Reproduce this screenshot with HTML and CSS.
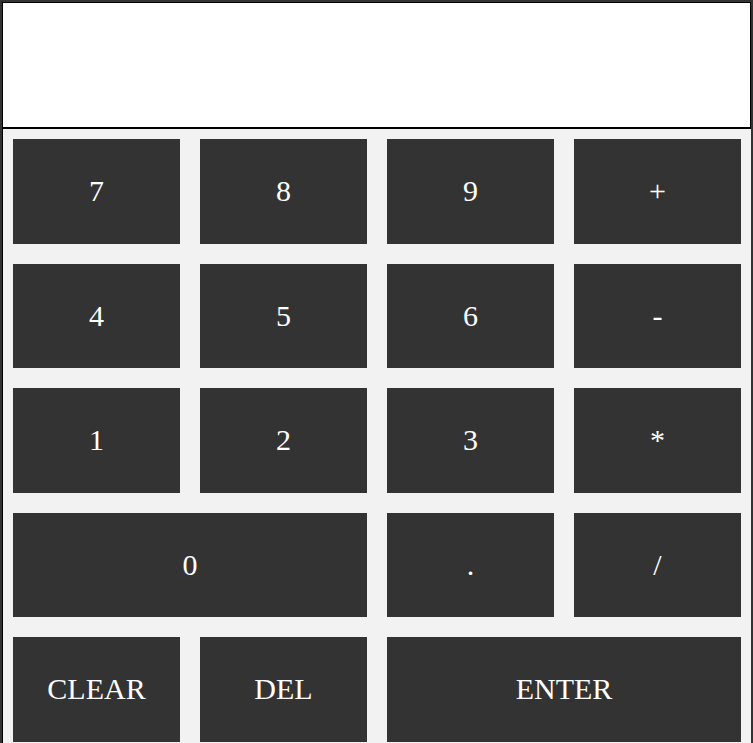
FILE: index.html
```html
<!DOCTYPE html>
<html>
<head>
<meta charset="utf-8">
<link rel="stylesheet" href="styles.css">
</head>
<body>
<div class="calc">
  <div class="display"></div>
  <div class="keys">
    <button class="key">7</button>
    <button class="key">8</button>
    <button class="key">9</button>
    <button class="key">+</button>
    <button class="key">4</button>
    <button class="key">5</button>
    <button class="key">6</button>
    <button class="key">-</button>
    <button class="key">1</button>
    <button class="key">2</button>
    <button class="key">3</button>
    <button class="key">*</button>
    <button class="key span2">0</button>
    <button class="key">.</button>
    <button class="key">/</button>
    <button class="key">CLEAR</button>
    <button class="key">DEL</button>
    <button class="key span2">ENTER</button>
  </div>
</div>
</body>
</html>
```

FILE: styles.css
```css
html, body {
  margin: 0;
  padding: 0;
}
body {
  font-family: "Liberation Serif", "Times New Roman", serif;
  background: #f2f2f2;
}
.calc {
  border: 2px solid #333;
  background: #f2f2f2;
}
.display {
  height: 124px;
  background: #fff;
  border: 1px solid #000;
}
.keys {
  display: grid;
  grid-template-columns: repeat(4, 1fr);
  grid-auto-rows: 104.5px;
  gap: 20px;
  padding: 10px;
  border-left: 1px solid #000;
  border-top: 1px solid #000;
}
.key {
  background: #333;
  color: #fff;
  border: none;
  margin: 0;
  padding: 0;
  font-family: "Liberation Serif", "Times New Roman", serif;
  font-size: 30px;
}
.span2 {
  grid-column: span 2;
}
```
